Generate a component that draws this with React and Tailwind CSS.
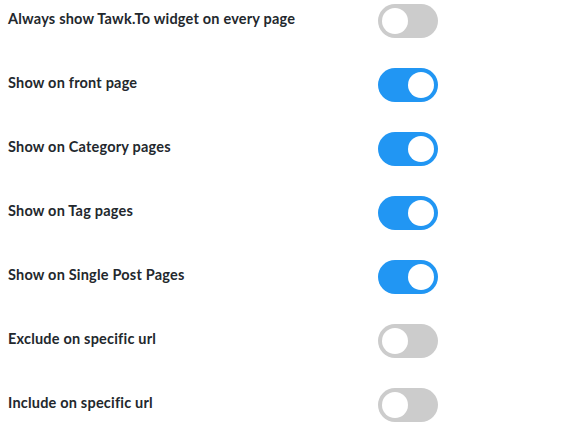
import React, { useState } from "react";

const rows = [
  { label: "Always show Tawk.To widget on every page", on: false },
  { label: "Show on front page", on: true },
  { label: "Show on Category pages", on: true },
  { label: "Show on Tag pages", on: true },
  { label: "Show on Single Post Pages", on: true },
  { label: "Exclude on specific url", on: false },
  { label: "Include on specific url", on: false },
];

const Toggle = ({ on, onClick }) => (
  <button
    onClick={onClick}
    className={`relative mt-1 h-[34px] w-[60px] rounded-full transition-colors ${
      on ? "bg-[#2196f3]" : "bg-[#cccccc]"
    }`}
  >
    <span
      className={`absolute bottom-1 left-1 h-[26px] w-[26px] rounded-full bg-white transition-transform ${
        on ? "translate-x-[26px]" : ""
      }`}
    />
  </button>
);

const App = () => {
  const [state, setState] = useState(rows.map((r) => r.on));

  const flip = (i) => {
    setState(state.map((v, j) => (j === i ? !v : v)));
  };

  return (
    <div className="h-[436px] w-[568px] bg-white px-2" style={{ fontFamily: "Lato, sans-serif" }}>
      {rows.map((row, i) => (
        <div key={row.label} className="flex h-16 items-start">
          <div className="w-[370px] pt-[9px] text-[14.5px] font-bold leading-5 tracking-[0.2px] text-[#23282d]">
            {row.label}
          </div>
          <Toggle on={state[i]} onClick={() => flip(i)} />
        </div>
      ))}
    </div>
  );
};

export default App;
